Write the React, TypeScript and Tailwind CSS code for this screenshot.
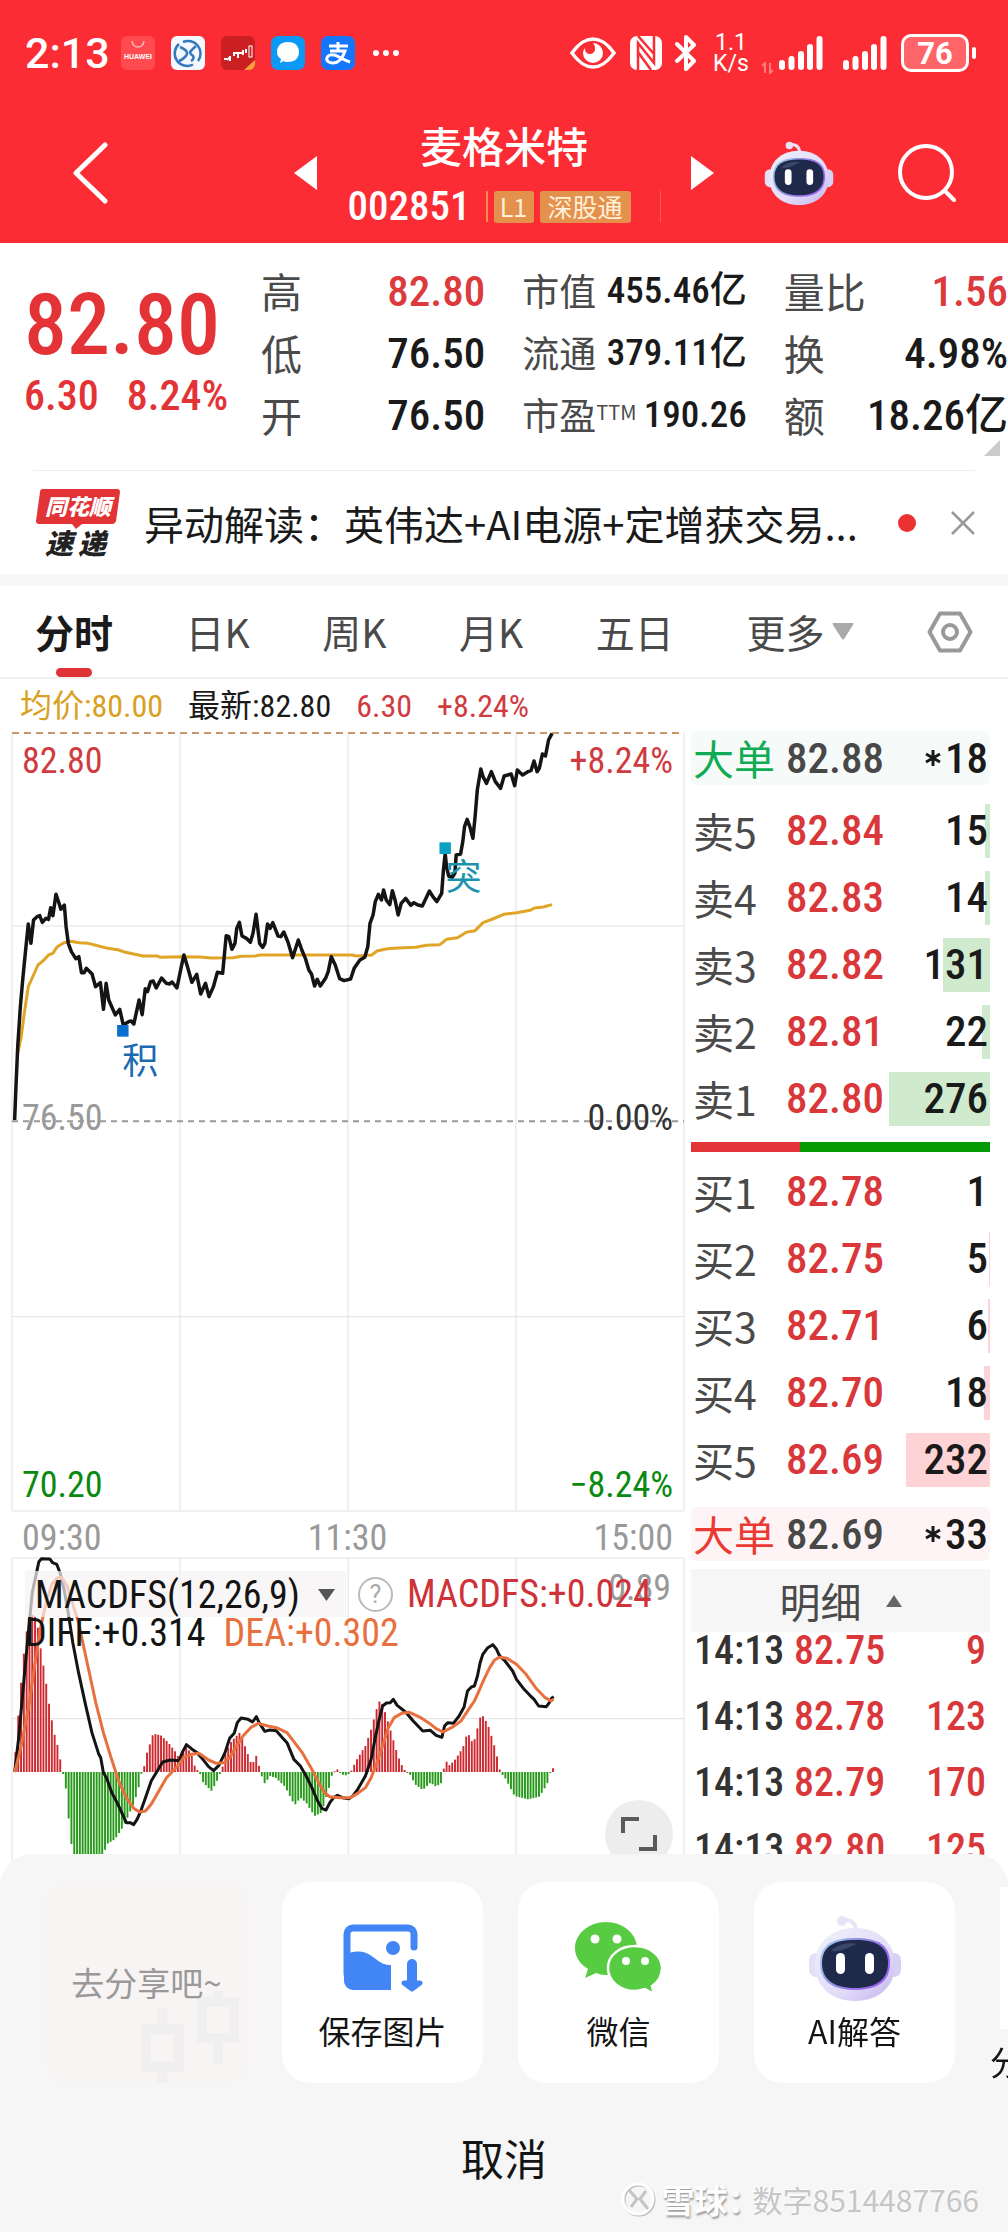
import type { ReactNode } from "react";

const PRICE_LINE =
  "33,1200 36,1100 40,980 46,860 52,770 58,690 64,612 70,670 76,600 84,590 90,587 96,607 104,595 110,598 115,563 120,587 127,523 134,550 138,568 146,555 150,620 155,670 162,695 172,716 179,710 185,758 191,758 196,745 209,762 217,800 228,788 235,868 241,790 247,840 262,885 272,868 280,915 292,905 298,903 304,912 316,840 323,884 330,806 335,815 342,785 348,783 355,804 367,774 378,790 385,792 391,786 402,804 412,740 418,705 427,745 436,787 447,763 456,822 467,790 475,830 485,800 494,757 506,760 514,647 520,650 527,688 534,670 538,625 544,607 550,648 560,655 569,667 575,640 582,583 590,670 597,682 602,670 608,612 614,625 620,608 632,648 638,650 645,636 655,668 665,713 678,660 686,690 694,715 702,750 708,762 715,798 721,778 728,798 740,775 746,755 753,710 762,735 772,776 782,782 797,777 805,745 818,720 829,712 836,680 841,610 848,585 853,545 860,523 867,540 872,510 878,540 886,554 892,512 898,540 905,585 912,550 922,535 934,556 940,548 950,555 960,558 970,530 976,513 984,530 993,545 1004,520 1008,450 1012,400 1015,440 1020,468 1028,472 1034,460 1037,405 1047,402 1052,365 1056,320 1062,298 1068,320 1075,355 1080,290 1085,210 1093,147 1098,170 1106,190 1117,155 1126,185 1138,205 1146,168 1162,162 1170,197 1176,150 1188,165 1200,155 1207,152 1214,123 1221,155 1226,145 1233,102 1240,108 1247,60 1255,40";

const AVERAGE_LINE =
  "40,1000 48,950 56,870 64,800 76,765 86,735 98,722 110,705 120,700 130,680 145,668 160,664 180,668 200,670 215,675 245,685 270,690 285,697 325,708 357,708 365,712 410,710 455,711 480,714 530,713 548,709 580,708 590,705 800,705 810,708 845,705 857,693 880,686 905,684 945,682 970,676 1000,674 1015,658 1040,653 1060,637 1080,632 1098,608 1120,597 1145,583 1175,578 1205,571 1215,564 1235,561 1255,554";

const DIFF_LINE =
  "38,698 48,600 60,450 72,300 84,160 97,90 101,68 108,58 130,59 137,70 148,75 158,105 167,150 178,220 190,310 205,400 222,490 240,580 258,645 263,655 270,700 278,715 292,760 308,795 322,830 330,850 340,850 349,856 358,840 366,820 380,775 395,725 408,700 425,668 445,662 468,664 476,640 487,616 500,628 515,640 530,660 545,682 558,694 572,678 588,640 600,597 612,582 620,550 630,536 648,540 660,548 670,532 677,550 692,576 705,572 722,574 738,595 750,610 768,660 785,680 800,710 815,745 830,785 842,808 852,812 862,790 872,775 882,768 895,775 912,778 922,770 935,750 955,710 970,660 980,600 990,545 1000,500 1010,491 1020,490 1028,480 1038,498 1060,518 1080,545 1105,575 1125,573 1140,588 1155,594 1162,560 1170,550 1185,552 1200,530 1213,503 1222,455 1232,443 1240,440 1248,410 1255,370 1262,345 1275,325 1288,316 1297,328 1306,350 1318,362 1340,395 1350,420 1370,450 1385,468 1396,480 1408,500 1428,502 1436,490 1441,478 1447,472";

const DEA_LINE =
  "38,698 55,620 75,500 90,380 105,270 120,190 135,135 150,115 162,115 175,140 190,195 205,250 218,320 235,410 250,490 270,580 290,655 310,725 330,775 350,808 365,818 380,815 395,795 415,755 435,715 460,685 480,655 500,645 520,642 545,662 565,672 585,670 600,655 615,625 635,590 655,565 675,552 700,560 725,566 750,580 770,610 790,640 815,690 835,735 850,762 862,772 890,775 915,775 935,762 955,745 970,715 985,670 1000,620 1015,565 1030,535 1050,522 1070,519 1100,535 1120,550 1140,568 1158,578 1185,562 1205,545 1225,510 1240,485 1250,460 1265,420 1280,385 1292,363 1305,354 1325,357 1350,375 1375,405 1400,445 1425,475 1440,485 1447,480";

const HISTOGRAM: [number, number][] = [
  [38, 670], [45, 560], [58, 385], [66, 300], [75, 235], [82, 225], [95, 235], [108, 345], [118, 410], [125, 475], [132, 520], [140, 578], [147, 602], [155, 645], [162, 695], [164, 702], [170, 725], [177, 815], [183, 880], [190, 950], [270, 950], [278, 915], [300, 900], [320, 865], [335, 830], [350, 790], [360, 755], [370, 700], [376, 695], [378, 655], [386, 635], [400, 583], [420, 588], [440, 610], [460, 640], [470, 662], [487, 620], [500, 645], [510, 685], [522, 700], [530, 728], [552, 755], [565, 730], [575, 702], [580, 690], [590, 640], [605, 605], [628, 578], [640, 620], [655, 668], [664, 668], [670, 648], [678, 685], [682, 705], [692, 733], [705, 710], [720, 715], [745, 742], [770, 798], [785, 775], [800, 790], [822, 830], [840, 820], [860, 745], [868, 705], [875, 695], [880, 688], [888, 698], [900, 710], [915, 702], [922, 685], [935, 655], [955, 620], [970, 570], [990, 485], [1000, 495], [1020, 570], [1040, 650], [1055, 690], [1070, 702], [1085, 735], [1105, 752], [1125, 730], [1140, 742], [1157, 728], [1162, 660], [1175, 678], [1190, 660], [1210, 625], [1222, 578], [1237, 615], [1258, 522], [1275, 555], [1290, 610], [1302, 665], [1308, 700], [1320, 715], [1345, 770], [1380, 780], [1410, 772], [1430, 735], [1437, 702], [1448, 682],
];

const ZERO = 698;
const BAR_STEP = 7.32;

function histogramAt(x: number) {
  for (let i = 1; i < HISTOGRAM.length; i++) {
    const [x0, y0] = HISTOGRAM[i - 1];
    const [x1, y1] = HISTOGRAM[i];
    if (x <= x1) return y0 + ((y1 - y0) * (x - x0)) / (x1 - x0);
  }
  return ZERO;
}

const BARS = Array.from({ length: 193 }, (_, i) => {
  const x = 40 + i * BAR_STEP;
  return { x, y: histogramAt(x) };
});

const SELLS = [
  { label: "卖5", price: "82.84", qty: 15 },
  { label: "卖4", price: "82.83", qty: 14 },
  { label: "卖3", price: "82.82", qty: 131 },
  { label: "卖2", price: "82.81", qty: 22 },
  { label: "卖1", price: "82.80", qty: 276 },
];
const BUYS = [
  { label: "买1", price: "82.78", qty: 1 },
  { label: "买2", price: "82.75", qty: 5 },
  { label: "买3", price: "82.71", qty: 6 },
  { label: "买4", price: "82.70", qty: 18 },
  { label: "买5", price: "82.69", qty: 232 },
];
const TRADES = [
  { time: "14:13", price: "82.75", qty: "9" },
  { time: "14:13", price: "82.78", qty: "123" },
  { time: "14:13", price: "82.79", qty: "170" },
  { time: "14:13", price: "82.80", qty: "125" },
];

function Robot({ className }: { className: string }) {
  return (
    <svg viewBox="0 0 92 86" className={className} aria-hidden="true">
      <defs>
        <linearGradient id="shell" x1="0" y1="0" x2="1" y2="1">
          <stop offset="0" stopColor="#eef0fb" />
          <stop offset="0.6" stopColor="#e2dcf8" />
          <stop offset="1" stopColor="#c3b4ee" />
        </linearGradient>
        <linearGradient id="rim" x1="0" y1="0" x2="1" y2="0.4">
          <stop offset="0" stopColor="#a9d8f2" />
          <stop offset="0.5" stopColor="#8f8ce0" />
          <stop offset="1" stopColor="#9a63f0" />
        </linearGradient>
      </defs>
      <path d="M32 5c8-1 14 1 15 10" fill="none" stroke="#e9e3f5" strokeWidth="4" strokeLinecap="round" />
      <circle cx="33" cy="6" r="5" fill="#e9e3f5" />
      <rect x="0" y="38" width="14" height="24" rx="7" fill="#e3e0f6" />
      <rect x="78" y="38" width="14" height="24" rx="7" fill="#d8cff5" />
      <path d="M46 13c25 0 40 16 40 37S70 86 46 86 6 71 6 50s15-37 40-37z" fill="url(#shell)" />
      <path d="M46 23c23 0 35 7 35 25s-12 27-35 27-35-9-35-27 12-25 35-25z" fill="url(#rim)" />
      <path d="M46 25c22 0 33 7 33 23S68 73 46 73 13 64 13 48s11-23 33-23z" fill="#1f2a4a" />
      <path d="M22 36c6-7 18-9 26-7-8 3-14 8-26 7z" fill="#3b4768" />
      <rect x="27" y="38" width="9" height="21" rx="4.500" fill="#fff" />
      <rect x="56" y="38" width="9" height="21" rx="4.500" fill="#fff" />
    </svg>
  );
}

function Signal() {
  return (
    <svg viewBox="0 0 44 36" className="h-9 w-11" fill="none" stroke="#fff" strokeWidth="6" strokeLinecap="round" aria-hidden="true">
      <path d="M3 28v4M12.500 24v8M22 19v13M31 12v20M40.500 4v28" />
    </svg>
  );
}

function StatusBar() {
  return (
    <div className="flex h-[106px] items-center justify-between pr-8 pl-[25px]">
      <div className="flex items-center">
        <span className="w-24 font-['Roboto'] text-[43px] leading-none font-medium">2:13</span>
        <div className="flex items-center gap-4">
          <svg viewBox="0 0 34 34" className="size-[34px]" aria-hidden="true">
            <rect width="34" height="34" rx="6" fill="#ff4a50" />
            <path d="M11 5c1 8 11 8 12 0" fill="none" stroke="#ffb4b4" strokeWidth="1.500" />
            <text x="17" y="23" textAnchor="middle" fontSize="7" fontWeight="700" fill="#fff" fontFamily="Liberation Sans, sans-serif">HUAWEI</text>
          </svg>
          <svg viewBox="0 0 34 34" className="size-[34px]" aria-hidden="true">
            <rect width="34" height="34" rx="6" fill="#f3f9fe" />
            <g fill="none" stroke="#3478bd" strokeWidth="2.500">
              <path d="M12 6A12.500 12.500 0 0 1 27 25M22 28.500A12.500 12.500 0 0 1 8 8" />
              <path d="M9 11c9 4 8 7 5 10s-3 3-6 4M25 10c-7 6-7 7-4 9s1 5-1 6" />
            </g>
          </svg>
          <svg viewBox="0 0 34 34" className="size-[34px]" aria-hidden="true">
            <rect width="34" height="34" rx="6" fill="#cb2022" />
            <path d="M34 24v4a6 6 0 0 1-6 6h-5z" fill="#f8a23c" />
            <path d="M3 23h3M6 24l3-3M9 25v-5M13 20v-3h4v5M18 17h4M22 19v-5M25 17v-4" stroke="#fff" strokeWidth="2" fill="none" />
            <rect x="28" y="10" width="3" height="11" fill="none" stroke="#fff" />
          </svg>
          <svg viewBox="0 0 34 34" className="size-[34px]" aria-hidden="true">
            <rect width="34" height="34" rx="7" fill="#0c98f5" />
            <path d="M17 6c7 0 11 4 11 10s-4 10-11 10c-2 0-3 0-4-1l-4 2 1-4c-3-2-4-4-4-7C6 10 10 6 17 6z" fill="#fff" />
          </svg>
          <svg viewBox="0 0 34 34" className="size-[34px]" aria-hidden="true">
            <rect width="34" height="34" rx="7" fill="#1477fb" />
            <g fill="none" stroke="#fff" strokeWidth="3">
              <path d="M17 6v9M8 10h19M9 15h15c-2 6-6 12-12 12-4 0-7-2-6-5 1-4 7-4 12-1 4 2 7 4 11 5" />
            </g>
          </svg>
        </div>
        <svg viewBox="0 0 28 8" className="ml-[17px] h-2 w-7" fill="#fff" aria-hidden="true">
          <circle cx="4" cy="4" r="3" />
          <circle cx="14" cy="4" r="3" />
          <circle cx="24" cy="4" r="3" />
        </svg>
      </div>
      <div className="flex items-center">
        <svg viewBox="0 0 46 32" className="h-8 w-[46px]" aria-hidden="true">
          <path d="M2 16C10 5 16 2 23 2s13 3 21 14c-8 11-14 14-21 14S10 27 2 16z" fill="none" stroke="#fff" strokeWidth="3.500" />
          <path d="M23 6a10 10 0 1 1-10 10c0-2 1-4 2-5 0 4 2 6 5 6 5 0 7-6 3-11z" fill="#fff" />
        </svg>
        <svg viewBox="0 0 32 34" className="ml-3.5 h-[34px] w-8" aria-hidden="true">
          <rect width="32" height="34" rx="7" fill="#fff" />
          <path d="M8 34V7l16 20V0M8 0l16 18M8 16l13 18" fill="none" stroke="#fb2c34" strokeWidth="2.500" />
        </svg>
        <svg viewBox="0 0 22 36" className="ml-[13px] h-9 w-[22px]" fill="none" stroke="#fff" strokeWidth="4" strokeLinejoin="round" strokeLinecap="round" aria-hidden="true">
          <path d="M2 9l17 17-8 8V2l8 8L2 26" />
        </svg>
        <div className="ml-4 flex w-9 flex-col items-center font-['Roboto'] text-[23px] leading-[21px]">
          <span>1.1</span>
          <span>K/s</span>
        </div>
        <svg viewBox="0 0 14 12" className="ml-3 h-3 w-3.5 self-end" fill="none" stroke="#ff7a7a" strokeWidth="2" aria-hidden="true">
          <path d="M1 4l3-3v10M9 1v10l3-3" />
        </svg>
        <div className="ml-1">
          <Signal />
        </div>
        <div className="ml-5">
          <Signal />
        </div>
        <div className="ml-3.5 flex h-[38px] w-[68px] items-center justify-center rounded-[10px] border-3 border-white bg-[#ff6468] font-['Roboto'] text-[31px] leading-none font-bold">76</div>
        <div className="ml-[3px] h-3 w-1 rounded-full bg-white" />
      </div>
    </div>
  );
}

function NavBar() {
  return (
    <div className="grid h-[137px] grid-cols-[1fr_420px_1fr] items-center pb-1">
      <button type="button" aria-label="返回" className="ml-[72px] w-9">
        <svg viewBox="0 0 36 64" className="h-16 w-9" fill="none" stroke="#fff" strokeWidth="5" strokeLinecap="round" strokeLinejoin="round">
          <path d="M33 4L4 32l29 28" />
        </svg>
      </button>
      <div className="flex items-center justify-between">
        <button type="button" aria-label="上一只">
          <svg viewBox="0 0 23 34" className="h-[34px] w-[23px]" fill="#fff"><path d="M23 0v34L0 17z" /></svg>
        </button>
        <div className="flex flex-col items-center pt-3">
          <h1 className="h-14 text-[42px] leading-[52px] font-medium">麦格米特</h1>
          <div className="flex h-16 items-center text-[25px] text-[#fdf0d8]">
            <span className="w-[138px] font-['Roboto_Condensed'] text-[41px] font-medium text-white">002851</span>
            <span className="h-[31px] w-0.5 bg-[#f38a4c]" />
            <span className="ml-1.5 flex h-8 w-10 items-center justify-center rounded-[3px] bg-[#e5914e]">L1</span>
            <span className="ml-1.5 flex h-8 w-[91px] items-center justify-center rounded-[3px] bg-[#e5914e]">深股通</span>
            <span className="ml-[29px] h-[31px] w-px bg-[#fb5a50]" />
          </div>
        </div>
        <button type="button" aria-label="下一只">
          <svg viewBox="0 0 23 34" className="h-[34px] w-[23px]" fill="#fff"><path d="M0 0v34l23-17z" /></svg>
        </button>
      </div>
      <div className="flex items-center justify-between pr-[52px] pl-[50px]">
        <button type="button" aria-label="智能助手"><Robot className="h-16 w-[70px]" /></button>
        <button type="button" aria-label="搜索">
          <svg viewBox="0 0 58 58" className="size-[58px]" fill="none" stroke="#fff" strokeWidth="4" strokeLinecap="round">
            <circle cx="28" cy="28" r="26" />
            <path d="M47 47l9 9" />
          </svg>
        </button>
      </div>
    </div>
  );
}

function Stat({ label, value, red, compact }: { label: ReactNode; value: string; red?: boolean; compact?: boolean }) {
  return (
    <div className="flex h-[62px] items-center justify-between whitespace-nowrap">
      <dt className={compact ? "text-[37px] text-[#4a4a4a]" : "text-[41px] text-[#4a4a4a]"}>{label}</dt>
      <dd
        className={`font-['Roboto_Condensed','Noto_Sans_CJK_SC',sans-serif] font-medium ${compact ? "text-[37px]" : "text-[43px]"} ${red ? "text-[#dc3a3c]" : "text-[#1a1a1a]"}`}
      >
        {value}
      </dd>
    </div>
  );
}

function Quote() {
  return (
    <section className="relative flex h-[227px] pt-[17px]">
      <div className="w-[261px] shrink-0 pl-6 font-['Roboto_Condensed'] text-[#e33336]">
        <div className="mt-[23px] text-[86px] leading-[84px] font-medium">82.80</div>
        <div className="mt-1 flex gap-7 text-[42px] leading-[50px] font-medium">
          <span>6.30</span>
          <span>8.24%</span>
        </div>
      </div>
      <dl className="grid flex-1 grid-cols-3 content-start gap-x-[37px]">
        <Stat label="高" value="82.80" red />
        <Stat label="市值" value="455.46亿" compact />
        <Stat label="量比" value="1.56" red />
        <Stat label="低" value="76.50" />
        <Stat label="流通" value="379.11亿" compact />
        <Stat label="换" value="4.98%" />
        <Stat label="开" value="76.50" />
        <Stat label={<>市盈<sup className="text-[20px]">TTM</sup></>} value="190.26" compact />
        <Stat label="额" value="18.26亿" />
      </dl>
      <svg viewBox="0 0 16 16" className="absolute right-2 bottom-3.5 size-4" fill="#ccc" aria-hidden="true"><path d="M16 0v16H0z" /></svg>
    </section>
  );
}

function News() {
  return (
    <section className="mx-[33px] flex h-[104px] items-center border-t border-[#eee]">
      <svg viewBox="0 0 84 70" className="ml-[3px] h-[70px] w-[84px] overflow-visible" fontFamily="Noto Sans CJK SC, sans-serif" fontWeight="900" aria-label="同花顺速递">
        <path d="M7 1h74q3 0 3 3l-4 29q-1 3-4 3H46l-6 5-4-5H3q-3 0-3-3L4 4q0-3 3-3z" fill="#e23337" />
        <text x="42" y="27" textAnchor="middle" fontSize="22" fontStyle="italic" fill="#fff">同花顺</text>
        <text x="9" y="66" fontSize="28" fontStyle="italic" fill="#222">速</text>
        <text x="42" y="66" fontSize="28" fontStyle="italic" fill="#222">递</text>
      </svg>
      <p className="ml-6 flex-1 text-[40px] whitespace-nowrap text-[#1a1a1a]">异动解读：英伟达+AI电源+定增获交易...</p>
      <span className="size-[18px] rounded-full bg-[#ea3330]" />
      <button type="button" aria-label="关闭" className="ml-[35px]">
        <svg viewBox="0 0 24 24" className="size-6" stroke="#999" strokeWidth="2.500"><path d="M1 1l22 22M23 1L1 23" /></svg>
      </button>
    </section>
  );
}

function Tabs() {
  return (
    <nav className="flex h-[93px] items-center justify-between border-b-2 border-[#f0f0f0] px-[35px] text-[39px] text-[#4a4a4a]">
      <button type="button" className="relative h-full font-bold text-[#1a1a1a]">
        分时
        <span className="absolute bottom-0 left-1/2 h-[9px] w-9 -translate-x-1/2 rounded-full bg-[#e03336]" />
      </button>
      <button type="button">日K</button>
      <button type="button">周K</button>
      <button type="button">月K</button>
      <button type="button">五日</button>
      <button type="button" className="flex items-center gap-2">
        更多
        <svg viewBox="0 0 22 17" className="h-[17px] w-[22px]" fill="#aaa"><path d="M1 0h20q1 0 0 2L12 16q-1 1-2 0L1 2q-1-2 0-2z" /></svg>
      </button>
      <button type="button" aria-label="设置">
        <svg viewBox="0 0 46 44" className="h-11 w-[46px]" fill="none" stroke="#999" strokeLinejoin="round">
          <path d="M13 3.500h20L43.500 22 33 40.500H13L2.500 22z" strokeWidth="4" />
          <circle cx="23" cy="22" r="7" strokeWidth="4" />
        </svg>
      </button>
    </nav>
  );
}

function PriceChart() {
  return (
    <div className="relative">
      <svg viewBox="27 39 1528 2334" preserveAspectRatio="none" className="block h-[778px] w-full overflow-visible" fill="none" aria-label="分时走势">
        <g stroke="#e2e2e2" strokeWidth="1">
          <path vectorEffect="non-scaling-stroke" d="M27 39V2373M409 39V2373M791 39V2373M1173 39V2373M1555 39V2373M27 618H1555M27 1790H1555M27 2373H1555" />
        </g>
        <path vectorEffect="non-scaling-stroke" d="M27 39H1555" stroke="#c8986c" strokeWidth="2" strokeDasharray="7 5" />
        <path vectorEffect="non-scaling-stroke" d="M27 1204H1555" stroke="#999" strokeWidth="2" strokeDasharray="6 5" />
        <polyline vectorEffect="non-scaling-stroke" points={AVERAGE_LINE} stroke="#e0a526" strokeWidth="3" strokeLinejoin="round" />
        <polyline vectorEffect="non-scaling-stroke" points={PRICE_LINE} stroke="#141414" strokeWidth="3.500" strokeLinejoin="round" />
        <rect x="266" y="915" width="26" height="35" fill="#0b6fd0" />
        <rect x="999" y="367" width="26" height="35" fill="#0c9fc4" />
      </svg>
      <div className="pointer-events-none absolute inset-0 font-['Roboto_Condensed'] text-[36px] leading-none">
        <span className="absolute top-[10px] left-[10px] text-[#cf3b3f]">82.80</span>
        <span className="absolute top-[10px] right-[11px] text-[#cf3b3f]">+8.24%</span>
        <span className="absolute top-[367px] left-[10px] text-[#999]">76.50</span>
        <span className="absolute top-[367px] right-[11px] text-[#333]">0.00%</span>
        <span className="absolute bottom-2 left-[10px] text-[#0a8a10]">70.20</span>
        <span className="absolute right-[11px] bottom-2 text-[#0a8a10]">−8.24%</span>
        <span className="absolute top-[307px] left-[16.400%] font-['Noto_Sans_CJK_SC'] text-[#1a6ab0]">积</span>
        <span className="absolute top-[123px] left-[64.500%] font-['Noto_Sans_CJK_SC'] text-[#1b93ad]">突</span>
      </div>
    </div>
  );
}

function MacdChart() {
  return (
    <div className="relative">
      <svg viewBox="31 56 1757 936" preserveAspectRatio="none" className="block h-[312px] w-full overflow-visible" fill="none" aria-label="MACDFS">
        <path vectorEffect="non-scaling-stroke" stroke="#e2e2e2" d="M31 56H1788M31 538H1788M31 56V992M470 56V992M910 56V992M1349 56V992M1788 56V992" />
        {BARS.map((b) => (
          <rect key={b.x} x={b.x - 2.5} width="5" y={Math.min(b.y, ZERO)} height={Math.max(Math.abs(b.y - ZERO), 3)} fill={b.y < ZERO ? "#cc2a30" : "#279a1a"} />
        ))}
        <polyline vectorEffect="non-scaling-stroke" points={DIFF_LINE} stroke="#141414" strokeWidth="3" strokeLinejoin="round" />
        <polyline vectorEffect="non-scaling-stroke" points={DEA_LINE} stroke="#e8703e" strokeWidth="3" strokeLinejoin="round" />
      </svg>
      <div className="absolute inset-x-[13px] top-3 font-['Roboto_Condensed'] text-[38px] leading-[48px] whitespace-nowrap">
        <span className="absolute -top-1.5 right-0 text-[36px] text-[#999]">0.89</span>
        <div className="flex items-center">
          <button type="button" className="flex h-[46px] w-[321px] items-center justify-between bg-[#f6f2f4]/70 pt-0.5 pr-[11px] pl-[10px] text-[#141414]">
            MACDFS(12,26,9)
            <svg viewBox="0 0 17 12" className="h-3 w-[17px]" fill="#555"><path d="M0 0h17L8.500 12z" /></svg>
          </button>
          <button type="button" aria-label="说明" className="ml-3 flex size-[35px] items-center justify-center rounded-full border-2 border-[#bbb] font-['Roboto'] text-[25px] leading-none text-[#aaa]">?</button>
          <span className="relative ml-3.5 text-[#cf3238]">MACDFS:+0.024</span>
        </div>
        <div className="flex gap-[18px] leading-[30px]">
          <span className="text-[#141414]">DIFF:+0.314</span>
          <span className="text-[#e8703e]">DEA:+0.302</span>
        </div>
      </div>
      <button type="button" aria-label="全屏" className="absolute right-[11px] bottom-0.5 flex size-[68px] items-center justify-center rounded-full bg-[#ededed]">
        <svg viewBox="0 0 36 36" className="size-9" fill="none" stroke="#5a5a5a" strokeWidth="4"><path d="M2 17V3h16M34 19v14H18" /></svg>
      </button>
    </div>
  );
}

function BigOrder({ price, qty, tone }: { price: string; qty: string; tone: "buy" | "sell" }) {
  return (
    <div className={`flex h-[54px] items-center rounded-md px-[2px] ${tone === "sell" ? "bg-[#f6faf8]" : "bg-[#fef4f5]"}`}>
      <span className={`w-[93px] text-[41px] ${tone === "sell" ? "text-[#12ab55]" : "text-[#ea3a32]"}`}>大单</span>
      <span className="font-['Roboto_Condensed'] text-[43px] font-medium text-[#484848]">{price}</span>
      <span className="ml-auto flex items-center gap-1 font-['Roboto_Condensed'] text-[43px] font-medium text-[#1a1a1a]">
        <svg viewBox="0 0 16 16" className="size-4" stroke="#1a1a1a" strokeWidth="3"><path d="M8 0v16M1 4l14 8M15 4L1 12" /></svg>
        {qty}
      </span>
    </div>
  );
}

function Levels({ rows, bar }: { rows: typeof SELLS; bar: string }) {
  return (
    <table className="w-full table-fixed">
      <tbody>
        {rows.map((r) => (
          <tr key={r.label} className="h-[67px]">
            <th scope="row" className="w-[95px] p-0 pl-[2px] text-left text-[41px] leading-none font-normal text-[#4a4a4a]">
              {r.label}
            </th>
            <td className="w-[100px] p-0 font-['Roboto_Condensed'] text-[43px] leading-none font-medium text-[#d93739]">{r.price}</td>
            <td className="relative p-0 pr-[2px] text-right font-['Roboto_Condensed'] text-[43px] leading-none font-medium text-[#1a1a1a]">
              <span className={`absolute top-[7px] right-0 h-[54px] ${bar}`} style={{ width: `${Math.floor(r.qty * 0.366)}px` }} />
              <span className="relative">{r.qty}</span>
            </td>
          </tr>
        ))}
      </tbody>
    </table>
  );
}

function OrderBook() {
  return (
    <aside className="-mt-0.5">
      <BigOrder price="82.88" qty="18" tone="sell" />
      <div className="mt-3">
        <Levels rows={SELLS} bar="bg-[#cfeacd]" />
      </div>
      <div className="mt-2.5 flex h-2.5">
        <span className="w-[36.500%] bg-[#e33539]" />
        <span className="flex-1 bg-[#049a04]" />
      </div>
      <div className="mt-1.5">
        <Levels rows={BUYS} bar="bg-[#fdd3d6]" />
      </div>
      <div className="mt-3.5">
        <BigOrder price="82.69" qty="33" tone="buy" />
      </div>
      <button type="button" className="relative mt-2 flex h-[63px] w-full items-center justify-center gap-6 bg-[#f6f6f6] text-[41px] text-[#4a4a4a]">
        明细
        <svg viewBox="0 0 16 12" className="h-3 w-4" fill="#666"><path d="M0 12h16L8 0z" /></svg>
      </button>
      <table className="-mt-3.5 w-full table-fixed font-['Roboto_Condensed'] text-[40px] leading-none font-medium text-[#d93739]">
        <tbody>
          {TRADES.map((t) => (
            <tr key={t.price} className="h-[66px]">
              <td className="w-[103px] p-0 pl-[3px] text-[#333]">{t.time}</td>
              <td className="w-[100px] p-0">{t.price}</td>
              <td className="p-0 pr-1 text-right">{t.qty}</td>
            </tr>
          ))}
        </tbody>
      </table>
    </aside>
  );
}

function ShareCard({ label, children }: { label: string; children: ReactNode }) {
  return (
    <button type="button" className="flex h-[201px] w-[201px] shrink-0 flex-col items-center rounded-[28px] bg-white pt-8 text-[32px] leading-none text-[#141414]">
      <span className="flex h-[88px] items-center">{children}</span>
      <span className="mt-3">{label}</span>
    </button>
  );
}

function ShareSheet() {
  return (
    <div role="dialog" aria-label="分享" className="fixed inset-x-0 bottom-0 h-[378px] overflow-hidden rounded-t-[32px] bg-[#f6f6f6] pt-7">
      <div className="flex gap-[35px] overflow-hidden pl-[46px]">
        <div className="relative flex h-[201px] w-[201px] shrink-0 items-center justify-center rounded-[20px] bg-[#f8f4f4]">
          <svg viewBox="0 0 100 92" className="absolute right-2 bottom-0 h-[92px] w-[100px]" fill="none" stroke="#efefef" strokeWidth="10" aria-hidden="true">
            <path d="M7 38h33v38H7zM23.500 17v21M23.500 76v16M63 11h33v36H63zM79 0v11M79 47v26" />
          </svg>
          <span className="relative text-[33px] text-[#999]">去分享吧~</span>
        </div>
        <ShareCard label="保存图片">
          <svg viewBox="0 0 80 68" className="h-[68px] w-20" aria-hidden="true">
            <path d="M71 23V10a6 6 0 0 0-6-6H10a6 6 0 0 0-6 6v40" fill="none" stroke="#4285f4" strokeWidth="7" strokeLinecap="round" />
            <path d="M1 32c9-6 20-6 29 1s12 8 18 8v25H10a9 9 0 0 1-9-9z" fill="#4285f4" />
            <circle cx="50" cy="24" r="7" fill="#4285f4" />
            <path d="M69 40v20M61 59l8 6 8-6z" stroke="#4285f4" strokeWidth="5" strokeLinejoin="round" fill="#4285f4" />
            <path d="M69 40v18" stroke="#4285f4" strokeWidth="10" strokeLinecap="round" />
          </svg>
        </ShareCard>
        <ShareCard label="微信">
          <svg viewBox="0 0 88 72" className="h-[72px] w-[88px]" aria-hidden="true">
            <path d="M31 0c17 0 31 12 31 26S48 53 31 53c-4 0-7-1-10-2l-11 5 3-9C5 42 0 35 0 26 0 12 14 0 31 0z" fill="#57cb41" />
            <path d="M60 24c15 0 27 10 27 22 0 8-4 14-10 18l2 8-9-5c-3 1-6 2-10 2-15 0-27-10-27-23s12-22 27-22z" fill="#57cb41" stroke="#fff" strokeWidth="2.500" />
            <g fill="#fff">
              <circle cx="20" cy="17" r="4.500" />
              <circle cx="42" cy="17" r="4.500" />
              <circle cx="51" cy="39" r="4" />
              <circle cx="70" cy="39" r="4" />
            </g>
          </svg>
        </ShareCard>
        <ShareCard label="AI解答">
          <Robot className="h-[86px] w-[92px]" />
        </ShareCard>
        <button type="button" className="shrink-0 text-left text-[33px] leading-none text-[#141414]">
          <span className="ml-2.5 block h-[142px] w-[142px] bg-white" />
          <span className="mt-4 block">分</span>
        </button>
      </div>
      <button type="button" className="mx-auto mt-8 block px-10 text-[43px] leading-[84px] text-[#141414]">取消</button>
      <div className="absolute right-[29px] bottom-3 flex items-center text-[30px] leading-[42px] text-[#c6c6c6]">
        <svg viewBox="0 0 36 36" className="mr-1.5 size-9" fill="none" aria-hidden="true">
          <circle cx="19" cy="19" r="15" stroke="#b8b8b8" strokeWidth="3" />
          <circle cx="18" cy="18" r="15" stroke="#fff" strokeWidth="3" />
          <path d="M9 9l8 9-6 8M28 28l-8-10 6-8" stroke="#c4c4c4" strokeWidth="3" />
        </svg>
        <span className="text-[33px] font-bold text-[#fdfdfd] [text-shadow:1px_2px_2px_#9a9a9a]">雪球：</span>
        <span className="-ml-2 [text-shadow:-1px_-1px_0_#fff]">数字8514487766</span>
      </div>
    </div>
  );
}

export default function App() {
  return (
    <div className="h-screen overflow-hidden bg-white font-['Noto_Sans_CJK_SC',sans-serif]">
      <header className="bg-[#fb2c34] text-white">
        <StatusBar />
        <NavBar />
      </header>
      <main>
        <Quote />
        <News />
        <div className="h-3 bg-[#f7f7f7]" />
        <Tabs />
        <div className="flex h-[54px] items-center gap-[25px] pl-5 font-['Roboto_Condensed','Noto_Sans_CJK_SC',sans-serif] text-[32px] text-[#1a1a1a]">
          <span className="text-[#d9a021]">均价:80.00</span>
          <span>最新:82.80</span>
          <span className="text-[#cf3b3f]">6.30</span>
          <span className="text-[#cf3b3f]">+8.24%</span>
        </div>
        <div className="grid grid-cols-[672fr_299fr] gap-[7px] pr-[18px] pl-3">
          <div>
            <PriceChart />
            <div className="flex h-[47px] items-center justify-between pt-1.5 pr-[11px] pl-2.5 font-['Roboto_Condensed'] text-[36px] leading-none text-[#999]">
              <span>09:30</span>
              <span>11:30</span>
              <span>15:00</span>
            </div>
            <MacdChart />
          </div>
          <OrderBook />
        </div>
      </main>
      <ShareSheet />
    </div>
  );
}
